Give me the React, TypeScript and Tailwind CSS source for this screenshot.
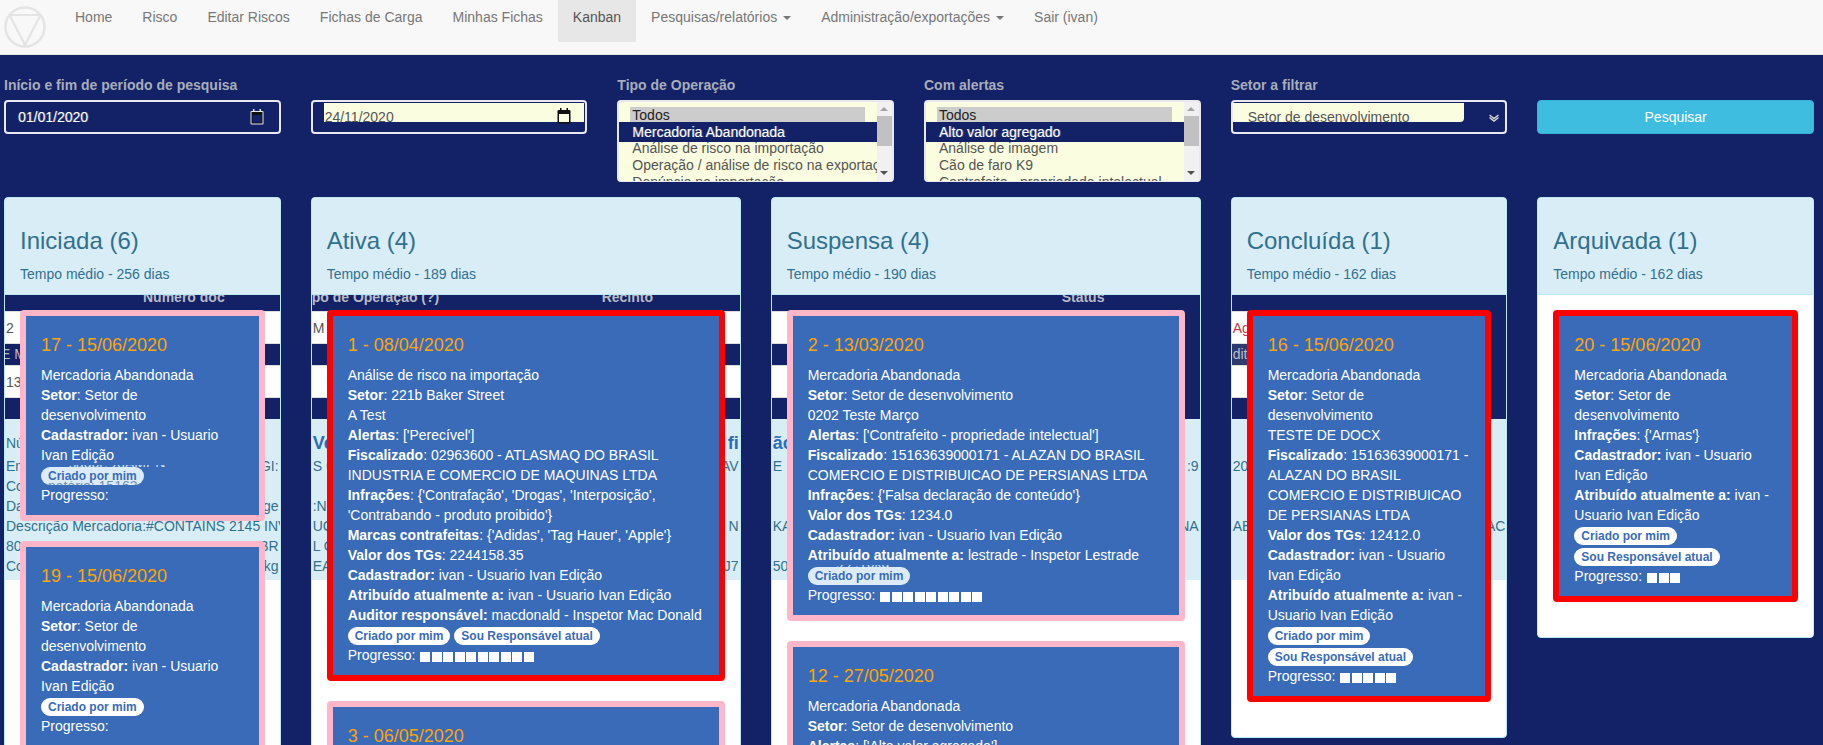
import type { ReactNode } from "react";

const navLinks = [
  { label: "Home" },
  { label: "Risco" },
  { label: "Editar Riscos" },
  { label: "Fichas de Carga" },
  { label: "Minhas Fichas" },
  { label: "Kanban", active: true },
  { label: "Pesquisas/relatórios", caret: true },
  { label: "Administração/exportações", caret: true },
  { label: "Sair (ivan)" },
];

const operacoes = [
  "Análise de risco na importação",
  "Operação / análise de risco na exportação",
  "Denúncia na importação",
];
const alertas = [
  "Análise de imagem",
  "Cão de faro K9",
  "Contrafeito - propriedade intelectual",
];

type CardData = {
  id: string;
  red?: boolean;
  lines: ReactNode[];
  mine?: boolean;
  responsible?: boolean;
  progress?: number;
  // text of the table behind that bleeds over the badge row
  bleed?: { above?: string; inside?: string };
};

type Backdrop = {
  headers: { text: string; className: string }[];
  rowWidth: string;
  rows: { text: string; className?: string }[];
  firstBold?: boolean;
  lines: [string, string][];
};

type Column = {
  title: string;
  media: string;
  span: string;
  backdrop?: Backdrop;
  cards: CardData[];
};

const B = ({ children }: { children: ReactNode }) => <b className="font-bold">{children}</b>;

const setor = (
  <>
    <B>Setor</B>: Setor de desenvolvimento
  </>
);
const cadastrador = (
  <>
    <B>Cadastrador:</B> ivan - Usuario Ivan Edição
  </>
);
const atribuidoIvan = (
  <>
    <B>Atribuído atualmente a:</B> ivan - Usuario Ivan Edição
  </>
);
const fiscalAlazan = (
  <>
    <B>Fiscalizado</B>: 15163639000171 - ALAZAN DO BRASIL COMERCIO E DISTRIBUICAO DE PERSIANAS LTDA
  </>
);

const columns: Column[] = [
  {
    title: "Iniciada (6)",
    media: "Tempo médio - 256 dias",
    span: "col-span-2",
    backdrop: {
      headers: [{ text: "Número doc", className: "pl-[138px]" }],
      rowWidth: "w-full",
      rows: [{ text: "2" }, { text: "E M", className: "-ml-[5px]" }, { text: "13." }],
      lines: [
        ["Número", ""],
        ["Embarcador", "GI:"],
        ["Consignatário", ""],
        ["Data", "ige"],
        ["Descrição Mercadoria:#CONTAINS 2145 INV", ""],
        ["80", "BR"],
        ["Co", "kg"],
      ],
    },
    cards: [
      {
        id: "17 - 15/06/2020",
        lines: ["Mercadoria Abandonada", setor, cadastrador],
        mine: true,
        bleed: { above: "sador: XIAMEN", inside: "natário: 15163" },
      },
      {
        id: "19 - 15/06/2020",
        lines: ["Mercadoria Abandonada", setor, cadastrador],
        mine: true,
      },
    ],
  },
  {
    title: "Ativa (4)",
    media: "Tempo médio - 189 dias",
    span: "col-span-3",
    backdrop: {
      headers: [
        { text: "po de Operação (?)", className: "w-[290px] shrink-0" },
        { text: "Recinto", className: "" },
      ],
      rowWidth: "w-full",
      rows: [{ text: "M" }, { text: "" }, { text: "" }],
      firstBold: true,
      lines: [
        ["Ve", "fi"],
        ["S C", "AV"],
        ["", ""],
        [":N", ""],
        ["UC", "N"],
        ["L C", ""],
        ["EA", "J7"],
      ],
    },
    cards: [
      {
        id: "1 - 08/04/2020",
        red: true,
        lines: [
          "Análise de risco na importação",
          <>
            <B>Setor</B>: 221b Baker Street
          </>,
          "A Test",
          <>
            <B>Alertas</B>: ['Perecível']
          </>,
          <>
            <B>Fiscalizado</B>: 02963600 - ATLASMAQ DO BRASIL INDUSTRIA E COMERCIO DE MAQUINAS LTDA
          </>,
          <>
            <B>Infrações</B>: {"{'Contrafação', 'Drogas', 'Interposição', 'Contrabando - produto proibido'}"}
          </>,
          <>
            <B>Marcas contrafeitas</B>: {"{'Adidas', 'Tag Hauer', 'Apple'}"}
          </>,
          <>
            <B>Valor dos TGs</B>: 2244158.35
          </>,
          cadastrador,
          atribuidoIvan,
          <>
            <B>Auditor responsável:</B> macdonald - Inspetor Mac Donald
          </>,
        ],
        mine: true,
        responsible: true,
        progress: 10,
      },
      { id: "3 - 06/05/2020", lines: [] },
    ],
  },
  {
    title: "Suspensa (4)",
    media: "Tempo médio - 190 dias",
    span: "col-span-3",
    backdrop: {
      headers: [{ text: "Status", className: "pl-[290px]" }],
      rowWidth: "w-[300px]",
      rows: [{ text: "" }, { text: "" }, { text: "" }],
      firstBold: true,
      lines: [
        ["ão", ""],
        ["E", ":9"],
        ["", ""],
        ["", ""],
        ["KA", "NA"],
        ["", ""],
        ["50", ""],
      ],
    },
    cards: [
      {
        id: "2 - 13/03/2020",
        lines: [
          "Mercadoria Abandonada",
          setor,
          "0202 Teste Março",
          <>
            <B>Alertas</B>: ['Contrafeito - propriedade intelectual']
          </>,
          fiscalAlazan,
          <>
            <B>Infrações</B>: {"{'Falsa declaração de conteúdo'}"}
          </>,
          <>
            <B>Valor dos TGs</B>: 1234.0
          </>,
          cadastrador,
          <>
            <B>Atribuído atualmente a:</B> lestrade - Inspetor Lestrade
          </>,
        ],
        mine: true,
        bleed: { above: ":22.10kg" },
        progress: 9,
      },
      {
        id: "12 - 27/05/2020",
        lines: [
          "Mercadoria Abandonada",
          setor,
          <>
            <B>Alertas</B>: ['Alto valor agregado']
          </>,
        ],
      },
    ],
  },
  {
    title: "Concluída (1)",
    media: "Tempo médio - 162 dias",
    span: "col-span-2",
    backdrop: {
      headers: [],
      rowWidth: "w-[100px]",
      rows: [
        { text: "Ag", className: "text-[#c7354a]" },
        { text: "dit", className: "bg-[#2c3a70]" },
        { text: "" },
      ],
      lines: [
        ["", ""],
        ["20", ""],
        ["", ""],
        ["", ""],
        ["AB", "AC"],
        ["", ""],
        ["", ""],
      ],
    },
    cards: [
      {
        id: "16 - 15/06/2020",
        red: true,
        lines: [
          "Mercadoria Abandonada",
          setor,
          "TESTE DE DOCX",
          fiscalAlazan,
          <>
            <B>Valor dos TGs</B>: 12412.0
          </>,
          cadastrador,
          atribuidoIvan,
        ],
        mine: true,
        responsible: true,
        progress: 5,
      },
    ],
  },
  {
    title: "Arquivada (1)",
    media: "Tempo médio - 162 dias",
    span: "col-span-2",
    cards: [
      {
        id: "20 - 15/06/2020",
        red: true,
        lines: [
          "Mercadoria Abandonada",
          setor,
          <>
            <B>Infrações</B>: {"{'Armas'}"}
          </>,
          cadastrador,
          atribuidoIvan,
        ],
        mine: true,
        responsible: true,
        progress: 3,
      },
    ],
  },
];

function Logo() {
  return (
    <svg width="60" height="54" viewBox="0 0 60 54" className="shrink-0 -mt-px">
      <circle cx="25" cy="28" r="19.5" fill="none" stroke="#e4e4e4" strokeWidth="2.5" />
      <path d="M9.5 16 H40.5 L25 46 Z" fill="none" stroke="#e4e4e4" strokeWidth="2.2" strokeLinejoin="round" />
    </svg>
  );
}

function CalendarIcon({ filled }: { filled?: boolean }) {
  return (
    <svg width="14" height="16" viewBox="0 0 14 16" className="shrink-0">
      {filled ? (
        <>
          <rect x="0.5" y="2" width="13" height="13.5" rx="1" fill="#111" />
          <rect x="2" y="6" width="10" height="8" fill="#fafde0" />
          <rect x="3" y="0" width="1.5" height="3" fill="#111" />
          <rect x="9.5" y="0" width="1.5" height="3" fill="#111" />
        </>
      ) : (
        <>
          <rect x="0.5" y="2" width="13" height="13.5" rx="1" fill="#e8e8e8" />
          <rect x="1.5" y="3" width="11" height="11.5" fill="#111" />
          <rect x="2.5" y="6" width="9" height="7.5" fill="#132166" />
          <rect x="3" y="0" width="1.5" height="3" fill="#e8e8e8" />
          <rect x="9.5" y="0" width="1.5" height="3" fill="#e8e8e8" />
        </>
      )}
    </svg>
  );
}

function FilterLabel({ children }: { children: ReactNode }) {
  return <div className="h-5 mb-[5px] text-sm leading-5 font-bold text-[#a8adbb] whitespace-nowrap">{children}</div>;
}

function MultiSelect({ selected, options }: { selected: string; options: string[] }) {
  return (
    <div className="flex h-[82px] border-2 border-b border-[#e8e8ee] rounded bg-[#fafde0] overflow-hidden">
      <div className="flex-1 min-w-0 pt-[5px] text-sm whitespace-nowrap overflow-hidden text-[#555]">
        <div className="h-[17px] ml-[11px] mr-3 pl-[2px] leading-[17px] bg-[#cccccc] text-[#222]">Todos</div>
        <div className="h-5 -mt-[2px] pl-[13px] leading-5 bg-[#132166] text-white [text-shadow:1px_0_0_#5a6088]">
          {selected}
        </div>
        <div className="-mt-[2px] pl-[13px]">
          {options.map((o) => (
            <div key={o} className="h-[17px] leading-[17px]">
              {o}
            </div>
          ))}
        </div>
      </div>
      <div className="flex flex-col items-center w-[15px] shrink-0 bg-[#f1f1f1] pt-[5px] pb-[6px]">
        <div className="border-x-[4px] border-b-[4px] border-x-transparent border-b-[#a3a3a3]" />
        <div className="w-full h-[30px] mt-[5px] bg-[#c1c1c1]" />
        <div className="mt-auto border-x-[4px] border-t-[4px] border-x-transparent border-t-[#505050]" />
      </div>
    </div>
  );
}

function Filters() {
  return (
    <div className="grid grid-cols-6 gap-x-[30px] pl-1 pr-[9px] pt-5">
      <div>
        <FilterLabel>Início e fim de período de pesquisa</FilterLabel>
        <div className="flex items-center justify-between h-[34px] pl-3 pr-[15px] border-2 border-[#e8e8ee] rounded text-sm text-white [text-shadow:1px_0_0_#5a6088]">
          01/01/2020
          <CalendarIcon />
        </div>
      </div>
      <div>
        <div className="h-5 mb-[5px]" />
        <div className="h-[34px] border-2 border-[#e8e8ee] rounded">
          <div className="flex justify-between h-[19px] mt-px ml-[11px] mr-px pr-[13px] bg-[#fafde0] text-sm text-[#555]">
            <span className="pl-px pt-1 leading-5">24/11/2020</span>
            <span className="mt-[5px]">
              <CalendarIcon filled />
            </span>
          </div>
        </div>
      </div>
      <div>
        <FilterLabel>Tipo de Operação</FilterLabel>
        <MultiSelect selected="Mercadoria Abandonada" options={operacoes} />
      </div>
      <div>
        <FilterLabel>Com alertas</FilterLabel>
        <MultiSelect selected="Alto valor agregado" options={alertas} />
      </div>
      <div>
        <FilterLabel>Setor a filtrar</FilterLabel>
        <div className="flex items-start h-[34px] border-2 border-[#e8e8ee] rounded">
          <div className="w-[231px] h-[19px] mt-px pl-[15px] pt-1 bg-[#fafde0] rounded-br text-sm leading-5 text-[#555] overflow-hidden whitespace-nowrap">
            Setor de desenvolvimento
          </div>
          <svg width="10" height="8" viewBox="0 0 10 8" className="ml-auto mr-[6px] mt-3">
            <path d="M0.5 1 L5 4.5 L9.5 1 M0.5 3.5 L5 7 L9.5 3.5" fill="none" stroke="#d8d8d8" strokeWidth="1.4" />
          </svg>
        </div>
      </div>
      <div className="pt-[25px]">
        <button className="block w-full h-[34px] rounded border border-[#37b3d8] bg-[#3fbde0] text-sm text-white">
          Pesquisar
        </button>
      </div>
    </div>
  );
}

function BackdropTable({ data }: { data: Backdrop }) {
  return (
    <div className="absolute inset-x-0 top-0 text-sm overflow-hidden whitespace-nowrap">
      <div className="bg-[#132166]">
        <div className="flex h-4 overflow-hidden font-bold text-[#b9bcc6]">
          {data.headers.map((h) => (
            <div key={h.text} className={`${h.className} -mt-2 leading-5`}>
              {h.text}
            </div>
          ))}
        </div>
        <div className={data.rowWidth}>
          <div className={`h-[33px] pl-px leading-[33px] bg-white border-y border-[#dddddd] text-[#555] ${data.rows[0].className ?? ""}`}>
            {data.rows[0].text}
          </div>
          <div className={`h-[21px] pl-px leading-[21px] text-[#b9bcc6] ${data.rows[1].className ?? ""}`}>
            {data.rows[1].text}
          </div>
          <div className={`h-[33px] pl-px leading-[33px] bg-white border-y border-[#dddddd] text-[#555] ${data.rows[2].className ?? ""}`}>
            {data.rows[2].text}
          </div>
          <div className="h-[21px]" />
        </div>
      </div>
      <div className="h-[161px] pt-3 bg-[#d9edf7] text-[#31708f]">
        {data.lines.map(([left, right], i) => (
          <div
            key={i}
            className={
              i === 0
                ? `flex justify-between h-[25px] leading-[25px] px-px ${data.firstBold ? "text-[18px] font-bold text-[#2b6cb8]" : ""}`
                : "flex justify-between h-5 leading-5 px-px"
            }
          >
            <span>{left}</span>
            <span>{right}</span>
          </div>
        ))}
      </div>
    </div>
  );
}

function Badge({ children, dim, inside }: { children: ReactNode; dim?: boolean; inside?: string }) {
  return (
    <span
      className={`relative h-[18px] px-[7px] py-[3px] rounded-[10px] text-xs leading-3 font-bold text-[#396bb8] whitespace-nowrap overflow-hidden ${
        dim ? "bg-[#dcebf5]" : "bg-white"
      }`}
    >
      {children}
      {inside && (
        <span className="absolute left-[7px] bottom-0 h-1 overflow-hidden text-sm leading-5 font-normal text-[#6d8fb5]">
          <span className="block -mt-[5px]">{inside}</span>
        </span>
      )}
    </span>
  );
}

function Card({ card }: { card: CardData }) {
  return (
    <div
      className={`relative mb-5 px-[15px] pt-[19px] pb-[10px] border-[6px] rounded bg-[#396bb8] text-sm leading-5 text-white ${
        card.red ? "border-[#ff0000]" : "border-[#ffb6c8]"
      }`}
    >
      <div className="h-5 mb-[10px] text-lg leading-5 text-[#ffa500]">{card.id}</div>
      {card.lines.map((line, i) => (
        <div key={i}>{line}</div>
      ))}
      {card.mine && (
        <div className="relative flex flex-wrap gap-x-1 gap-y-[3px] pt-[2px]">
          {card.bleed?.above && (
            <span className="absolute left-[28px] top-0 h-[2px] overflow-hidden text-[#cfe3f2] whitespace-nowrap">
              <span className="block -mt-[12px]">{card.bleed.above}</span>
            </span>
          )}
          <Badge dim={!!card.bleed} inside={card.bleed?.inside}>
            Criado por mim
          </Badge>
          {card.responsible && <Badge>Sou Responsável atual</Badge>}
        </div>
      )}
      {card.lines.length > 0 && (
        <div className="flex items-center h-5">
          Progresso:
          <span className="flex gap-[1.5px] ml-[5px] mt-[3px]">
            {Array.from({ length: card.progress ?? 0 }).map((_, i) => (
              <span key={i} className="w-[10px] h-[10px] bg-white" />
            ))}
          </span>
        </div>
      )}
    </div>
  );
}

function Panel({ column }: { column: Column }) {
  return (
    <div className={`${column.span} self-start border border-[#bce8f1] rounded bg-white overflow-hidden`}>
      <div className="px-[15px] pt-[30px] pb-[10px] bg-[#d9edf7] border-b border-[#bce8f1] text-[#31708f]">
        <h3 className="text-2xl leading-[26px] mb-[10px]">{column.title}</h3>
        <p className="text-sm leading-5">{column.media}</p>
      </div>
      <div className="relative p-[15px]">
        {column.backdrop && <BackdropTable data={column.backdrop} />}
        {column.cards.map((card) => (
          <Card key={card.id} card={card} />
        ))}
      </div>
    </div>
  );
}

export default function App() {
  return (
    <div className="h-screen overflow-hidden bg-[#132166] font-['Liberation_Sans',Arial,sans-serif]">
      {/* Navbar */}
      <nav className="flex h-[55px] bg-[#f8f8f8] border-b border-[#e7e7e7] text-sm text-[#777]">
        <Logo />
        {navLinks.map((link) => (
          <a
            key={link.label}
            className={`h-[42px] px-[15px] pt-[7px] leading-5 whitespace-nowrap ${
              link.active ? "bg-[#e7e7e7] text-[#555]" : ""
            }`}
          >
            {link.label}
            {link.caret && (
              <span className="inline-block align-middle ml-[6px] border-x-4 border-t-4 border-x-transparent border-t-[#777]" />
            )}
          </a>
        ))}
      </nav>

      <Filters />

      {/* Kanban */}
      <div className="grid grid-cols-12 gap-x-[30px] pl-1 pr-[9px] mt-[15px]">
        {columns.map((column) => (
          <Panel key={column.title} column={column} />
        ))}
      </div>
    </div>
  );
}
